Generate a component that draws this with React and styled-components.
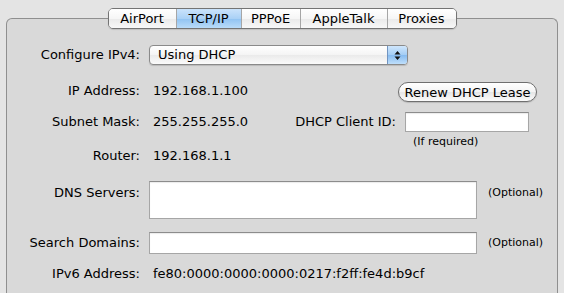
import React from 'react';
import styled, { createGlobalStyle } from 'styled-components';

const GlobalStyle = createGlobalStyle`
  * { box-sizing: border-box; }
  html, body { margin: 0; padding: 0; }
  body {
    width: 564px;
    height: 293px;
    overflow: hidden;
    background: #e4e4e4;
    font-family: "DejaVu Sans", "Liberation Sans", sans-serif;
    font-size: 13px;
    color: #000;
  }
`;

const Page = styled.div`
  padding-top: 8px;
`;

const TabBar = styled.div`
  position: relative;
  z-index: 1;
  display: flex;
  justify-content: center;
`;

const Tabs = styled.div`
  display: flex;
  height: 21px;
  border: 1px solid #747474;
  border-radius: 5px;
  overflow: hidden;
  box-shadow: 0 1px 1px rgba(0, 0, 0, 0.12);
`;

const Tab = styled.div`
  width: ${p => p.$w}px;
  display: flex;
  align-items: center;
  justify-content: center;
  line-height: 19px;
  background: ${p => p.$active
    ? 'linear-gradient(#cbe3fb 0%, #aad1f6 50%, #90c3f2 51%, #b9dbf9 100%)'
    : 'linear-gradient(#ffffff 0%, #f6f6f6 50%, #eaeaea 51%, #f8f8f8 100%)'};
  & + & { border-left: 1px solid #a6a6a6; }
`;

const GroupBox = styled.div`
  margin: -11px 6px 0;
  height: 275px;
  border: 1px solid #8f8f8f;
  border-bottom: none;
  border-radius: 6px 6px 0 0;
  background: #d9d9d9;
  padding-top: 26px;
`;

const Row = styled.div`
  display: flex;
  align-items: ${p => (p.$top ? 'flex-start' : 'center')};
  margin-top: ${p => p.$mt || 0}px;
`;

const Label = styled.div`
  width: 133px;
  flex-shrink: 0;
  margin-right: 9px;
  padding-top: ${p => p.$pt || 0}px;
  text-align: right;
  line-height: 20px;
  white-space: nowrap;
`;

const Value = styled.div`
  padding-left: 4px;
  line-height: 20px;
  white-space: nowrap;
`;

const Popup = styled.div`
  width: 259px;
  height: 20px;
  display: flex;
  border: 1px solid #8a8a8a;
  border-radius: 4px;
  overflow: hidden;
  background: linear-gradient(#ffffff 0%, #f4f4f4 50%, #eaeaea 51%, #fbfbfb 100%);
  box-shadow: 0 1px 1px rgba(0, 0, 0, 0.14);
`;

const PopupText = styled.div`
  flex: 1;
  padding-left: 8px;
  line-height: 18px;
`;

const PopupArrows = styled.div`
  width: 20px;
  display: flex;
  align-items: center;
  justify-content: center;
  border-left: 1px solid #7194c0;
  background: linear-gradient(#cfe6fc 0%, #a3cdf5 50%, #86bbf0 51%, #bfdffb 100%);
`;

const Info = styled.div`
  display: flex;
  margin-top: 16px;
`;

const LeftCol = styled.div`
  width: 291px;
  display: flex;
  flex-direction: column;
`;

const RightCol = styled.div`
  width: 239px;
  display: flex;
  flex-direction: column;
  align-items: flex-end;
`;

const PillButton = styled.button`
  width: 139px;
  height: 20px;
  margin-top: 1px;
  padding: 0;
  border: 1px solid #6f6f6f;
  border-radius: 10px;
  font: inherit;
  color: #000;
  background: linear-gradient(#ffffff 0%, #f4f4f4 50%, #e6e6e6 51%, #fbfbfb 100%);
  box-shadow: 0 1px 1px rgba(0, 0, 0, 0.15);
`;

const ClientRow = styled.div`
  display: flex;
  align-items: flex-start;
  gap: 9px;
  margin-top: 10px;
  padding-right: 8px;
`;

const SideLabel = styled.div`
  line-height: 20px;
  white-space: nowrap;
`;

const FieldStack = styled.div`
  display: flex;
  flex-direction: column;
`;

const Field = styled.input`
  display: block;
  flex-shrink: 0;
  width: ${p => p.$w}px;
  height: ${p => p.$h || 20}px;
  margin: 0;
  padding: 0 3px;
  border: 1px solid #a6a6a6;
  border-top-color: #8c8c8c;
  border-radius: 0;
  background: #fff;
  box-shadow: inset 0 1px 1px rgba(0, 0, 0, 0.08);
  font: inherit;
  outline: none;
`;

const Area = styled.textarea`
  display: block;
  flex-shrink: 0;
  width: 328px;
  height: 38px;
  margin: 0;
  padding: 2px 3px;
  border: 1px solid #a6a6a6;
  border-top-color: #8c8c8c;
  background: #fff;
  box-shadow: inset 0 1px 1px rgba(0, 0, 0, 0.08);
  font: inherit;
  resize: none;
  outline: none;
`;

const Hint = styled.div`
  font-size: 11px;
  line-height: 14px;
  margin-top: 3px;
  padding-left: 8px;
  white-space: nowrap;
`;

const Note = styled.div`
  font-size: 11px;
  line-height: 20px;
  margin-left: 11px;
  padding-top: ${p => p.$pt || 0}px;
  white-space: nowrap;
`;

const tabs = [
  { name: 'AirPort', w: 67 },
  { name: 'TCP/IP', w: 65, active: true },
  { name: 'PPPoE', w: 59 },
  { name: 'AppleTalk', w: 87 },
  { name: 'Proxies', w: 69 },
];

export default function App() {
  return (
    <Page>
      <GlobalStyle />
      <TabBar>
        <Tabs>
          {tabs.map(t => (
            <Tab key={t.name} $w={t.w} $active={t.active}>{t.name}</Tab>
          ))}
        </Tabs>
      </TabBar>
      <GroupBox>
        <Row>
          <Label>Configure IPv4:</Label>
          <Popup>
            <PopupText>Using DHCP</PopupText>
            <PopupArrows>
              <svg width="7" height="11" viewBox="0 0 7 11">
                <path d="M3.5 1L6.5 4.5H0.5Z M0.5 6.5H6.5L3.5 10Z" fill="#111" />
              </svg>
            </PopupArrows>
          </Popup>
        </Row>

        <Info>
          <LeftCol>
            <Row>
              <Label>IP Address:</Label>
              <Value>192.168.1.100</Value>
            </Row>
            <Row $mt={11}>
              <Label>Subnet Mask:</Label>
              <Value>255.255.255.0</Value>
            </Row>
            <Row $mt={14}>
              <Label>Router:</Label>
              <Value>192.168.1.1</Value>
            </Row>
          </LeftCol>
          <RightCol>
            <PillButton>Renew DHCP Lease</PillButton>
            <ClientRow>
              <SideLabel>DHCP Client ID:</SideLabel>
              <FieldStack>
                <Field $w={124} />
                <Hint>(If required)</Hint>
              </FieldStack>
            </ClientRow>
          </RightCol>
        </Info>

        <Row $top $mt={15}>
          <Label $pt={2}>DNS Servers:</Label>
          <Area />
          <Note $pt={2}>(Optional)</Note>
        </Row>
        <Row $mt={13}>
          <Label>Search Domains:</Label>
          <Field $w={328} $h={22} />
          <Note>(Optional)</Note>
        </Row>
        <Row $mt={10}>
          <Label>IPv6 Address:</Label>
          <Value>fe80:0000:0000:0000:0217:f2ff:fe4d:b9cf</Value>
        </Row>
      </GroupBox>
    </Page>
  );
}
